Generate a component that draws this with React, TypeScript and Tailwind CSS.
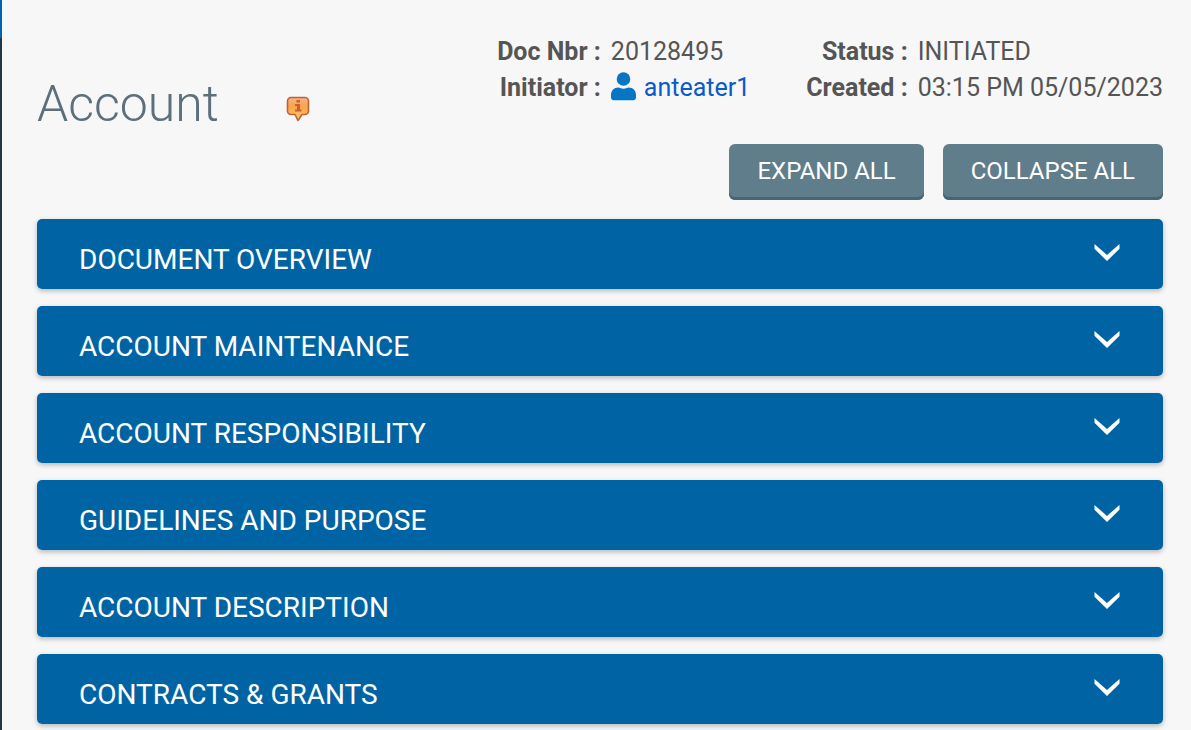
import { useState } from "react";

const SECTIONS = [
    "Document Overview",
    "Account Maintenance",
    "Account Responsibility",
    "Guidelines and Purpose",
    "Account Description",
    "Contracts & Grants",
];

function InfoIcon() {
    return (
        <svg width="24" height="26" viewBox="0 0 24 26" aria-hidden="true">
            <defs>
                <linearGradient id="bubble" x1="0" y1="0" x2="0" y2="1">
                    <stop offset="0%" stopColor="#f5b48c" />
                    <stop offset="40%" stopColor="#fba347" />
                    <stop offset="100%" stopColor="#fdcf78" />
                </linearGradient>
            </defs>
            <path
                d="M5 1.500h14a3.500 3.500 0 0 1 3.500 3.500v10a3.500 3.500 0 0 1-3.500 3.500h-3L12 24.500l-3-6H5A3.500 3.500 0 0 1 1.500 15V5A3.500 3.500 0 0 1 5 1.500z"
                fill="url(#bubble)"
                stroke="#bf6238"
                strokeWidth="1.600"
                strokeLinejoin="round"
            />
            <path d="M10.500 4H14v2.500h-3.500zM9 8h5v5.500h1.500v2H9v-2h2V10H9z" fill="#c9602f" />
        </svg>
    );
}

function UserIcon() {
    return (
        <svg width="25" height="33" viewBox="0 0 25 33" fill="#0774c4" aria-hidden="true">
            <circle cx="12.500" cy="7" r="6.800" />
            <path d="M0 25.500V23c0-4.500 3-7.500 7.200-7.500 1.500 0 2.600 1.200 5.300 1.200s3.800-1.200 5.300-1.200C22 15.500 25 18.500 25 23v2.500c0 1.500-1.200 2.700-2.700 2.700H2.700C1.200 28.200 0 27 0 25.500z" />
        </svg>
    );
}

function Chevron({ open }: { open: boolean }) {
    return (
        <svg
            width="26"
            height="18"
            viewBox="0 0 26 18"
            fill="white"
            className={open ? "rotate-180" : ""}
            aria-hidden="true"
        >
            <path d="M.5 0 13 11 25.500 0v4.700L13 17 .5 4.700z" />
        </svg>
    );
}

function ActionButton({ label, onClick }: { label: string; onClick: () => void }) {
    return (
        <button
            type="button"
            onClick={onClick}
            className="h-14 rounded-md bg-[#607d8b] px-7 pb-0.5 text-2xl text-white uppercase shadow-[inset_0_-3px_0_#4a6572]"
        >
            {label}
        </button>
    );
}

function Section({ title, open, onToggle }: { title: string; open: boolean; onToggle: () => void }) {
    return (
        <section className="rounded-[5px] bg-white shadow-[0_2px_5px_rgba(0,0,0,0.26)]">
            <h2>
                <button
                    type="button"
                    aria-expanded={open}
                    onClick={onToggle}
                    className="flex w-full items-start justify-between rounded-[5px] bg-[#0064a4] pt-[25px] pr-[43px] pb-[13px] pl-[42px] text-left text-[28px] leading-8 text-white uppercase"
                >
                    <span>{title}</span>
                    <Chevron open={open} />
                </button>
            </h2>
            {open && <p className="px-[42px] py-6 text-[25px] text-[#555]">No data entered.</p>}
        </section>
    );
}

export default function App() {
    const [opened, setOpened] = useState<string[]>([]);

    const toggle = (title: string) =>
        setOpened((prev) => (prev.includes(title) ? prev.filter((t) => t !== title) : [...prev, title]));

    return (
        <div className="flex min-h-screen bg-[#f7f7f7] font-['Roboto','Liberation_Sans',sans-serif]">
            {/* Edge of the side navigation */}
            <div className="flex w-0.5 shrink-0 flex-col bg-[#263640]">
                <div className="h-[38px] bg-[#0064b0]" />
            </div>

            <main className="h-screen min-w-0 flex-1 overflow-y-auto pt-[34px] pr-7 pl-[35px] [scrollbar-width:none]">
                <header className="flex items-start justify-between">
                    <div className="flex items-end gap-[67px] pt-10">
                        <h1 className="text-[50px] leading-[60px] font-light text-[#5c6f7a]">Account</h1>
                        <button type="button" aria-label="Document help" className="pb-3">
                            <InfoIcon />
                        </button>
                    </div>
                    <table className="text-[25px] leading-9 whitespace-nowrap text-[#555]">
                        <tbody>
                            <tr>
                                <th className="pr-2.5 text-right font-bold">Doc Nbr :</th>
                                <td>20128495</td>
                                <th className="pr-2.5 pl-14 text-right font-bold">Status :</th>
                                <td>INITIATED</td>
                            </tr>
                            <tr>
                                <th className="pr-2.5 text-right font-bold">Initiator :</th>
                                <td>
                                    <a href="#anteater1" className="flex items-center gap-2 text-[#0a5bc9]">
                                        <UserIcon />
                                        anteater1
                                    </a>
                                </td>
                                <th className="pr-2.5 pl-14 text-right font-bold">Created :</th>
                                <td>03:15 PM 05/05/2023</td>
                            </tr>
                        </tbody>
                    </table>
                </header>

                <div className="mt-2.5 flex justify-end gap-[19px]">
                    <ActionButton label="Expand All" onClick={() => setOpened(SECTIONS)} />
                    <ActionButton label="Collapse All" onClick={() => setOpened([])} />
                </div>

                <div className="mt-[19px] flex flex-col gap-[17px]">
                    {SECTIONS.map((title) => (
                        <Section
                            key={title}
                            title={title}
                            open={opened.includes(title)}
                            onToggle={() => toggle(title)}
                        />
                    ))}
                </div>
            </main>
        </div>
    );
}
